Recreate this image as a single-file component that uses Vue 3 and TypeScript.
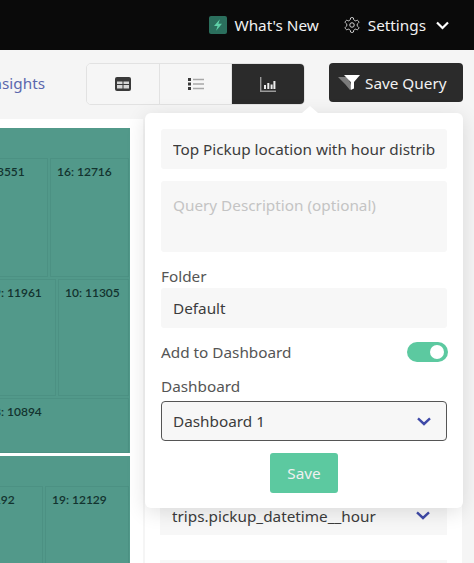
<script setup lang="ts">
import { ref } from 'vue'

interface Cell {
  label: string
  width: number
}

interface Group {
  rows: { height: number; cells: Cell[] }[]
}

const groups: Group[] = [
  {
    rows: [
      { height: 119, cells: [{ label: '15: 13551', width: 85 }, { label: '16: 12716', width: 79 }] },
      { height: 117, cells: [{ label: '9: 11961', width: 69 }, { label: '10: 11305', width: 71 }] },
      { height: 55, cells: [{ label: '8: 10894', width: 142 }] },
    ],
  },
  {
    rows: [
      { height: 90, cells: [{ label: '20: 12192', width: 90 }, { label: '19: 12129', width: 84 }] },
    ],
  },
]

const queryName = ref('Top Pickup location with hour distribution')
const folder = ref('Default')
</script>

<template>
  <div class="page">
    <header class="topbar">
      <div class="top-item">
        <span class="bolt-box">
          <svg width="14" height="14" viewBox="0 0 12 12"><path d="M7.6 1 2.600 6.800h3L4.400 11l5-6H6.300z" fill="#5fd0a8" /></svg>
        </span>
        What's New
      </div>
      <div class="top-item settings">
        <svg class="gear" width="18" height="18" viewBox="0 0 24 24" fill="none" stroke="#d8d8d8" stroke-width="1.300">
          <path d="M12.22 2h-.44a2 2 0 0 0-2 2v.18a2 2 0 0 1-1 1.73l-.43.25a2 2 0 0 1-2 0l-.15-.08a2 2 0 0 0-2.73.73l-.22.38a2 2 0 0 0 .73 2.73l.15.1a2 2 0 0 1 1 1.72v.51a2 2 0 0 1-1 1.74l-.15.09a2 2 0 0 0-.73 2.73l.22.38a2 2 0 0 0 2.73.73l.15-.08a2 2 0 0 1 2 0l.43.25a2 2 0 0 1 1 1.73V20a2 2 0 0 0 2 2h.44a2 2 0 0 0 2-2v-.18a2 2 0 0 1 1-1.73l.43-.25a2 2 0 0 1 2 0l.15.08a2 2 0 0 0 2.73-.73l.22-.39a2 2 0 0 0-.73-2.73l-.15-.08a2 2 0 0 1-1-1.74v-.5a2 2 0 0 1 1-1.74l.15-.09a2 2 0 0 0 .73-2.73l-.22-.38a2 2 0 0 0-2.73-.73l-.15.08a2 2 0 0 1-2 0l-.43-.25a2 2 0 0 1-1-1.73V4a2 2 0 0 0-2-2z" />
          <circle cx="12" cy="12" r="3" />
        </svg>
        Settings
        <svg class="top-chevron" width="13" height="9" viewBox="0 0 13 9" fill="none" stroke="#fff" stroke-width="2.200"><path d="M1 1.500 6.500 7 12 1.500" /></svg>
      </div>
    </header>

    <div class="toolbar">
      <a class="insights">Insights</a>
      <div class="segments">
        <button class="segment">
          <svg width="16" height="14" viewBox="0 0 16 14">
            <rect width="16" height="14" rx="2" fill="#3a3a3a" />
            <path d="M2 4.500h5.500V7H2zM8.500 4.500H14V7H8.500zM2 8h5.500v3.500H2zM8.500 8H14v3.500H8.500z" fill="#d6d6d6" />
          </svg>
        </button>
        <button class="segment">
          <svg width="16" height="14" viewBox="0 0 16 14">
            <path d="M0 1h3v3H0zM0 5.500h3v3H0zM0 10h3v3H0z" fill="#3a3a3a" />
            <path d="M5 2.500h11M5 7h11M5 11.500h11" stroke="#a8a8a8" stroke-width="1.500" />
          </svg>
        </button>
        <button class="segment active">
          <svg width="16" height="15" viewBox="0 0 16 15">
            <path d="M.7 0v14.300H16" fill="none" stroke="#9a9a9a" stroke-width="1.400" />
            <path d="M4 8h2v4H4zM7.300 6h2v6h-2zM10.600 7.500h2V12h-2zM13.400 4h2v8h-2z" fill="#ededed" />
          </svg>
        </button>
      </div>
      <button class="save-query">
        <svg width="22" height="15" viewBox="0 0 22 15">
          <path d="M0 2h10l4 11-2 2-5-6z" fill="#7b7b7b" />
          <path d="M6 0h16l-6 7v6.500L12.800 15V7z" fill="#fff" />
        </svg>
        Save Query
      </button>
    </div>

    <main class="content">
      <section class="chart-card">
        <div v-for="(group, g) in groups" :key="g" class="tree-group">
          <div class="tree-head"></div>
          <div v-for="(row, r) in group.rows" :key="r" class="tree-row" :style="{ height: row.height + 'px' }">
            <div v-for="cell in row.cells" :key="cell.label" class="tree-cell" :style="{ width: cell.width + 'px' }">
              {{ cell.label }}
            </div>
          </div>
        </div>
      </section>

      <aside class="side-card">
        <div class="side-select">
          <span>trips.pickup_datetime__hour</span>
          <svg width="14" height="9" viewBox="0 0 14 9" fill="none" stroke="#3f4aa8" stroke-width="2.400"><path d="M1 1.400 7 7l6-5.600" /></svg>
        </div>
        <div class="side-select"></div>
      </aside>
    </main>

    <form class="popover" @submit.prevent>
      <span class="arrow"></span>
      <input v-model="queryName" class="field" type="text" />
      <textarea class="field area" placeholder="Query Description (optional)"></textarea>
      <label class="label folder-label">Folder</label>
      <input v-model="folder" class="field" type="text" />
      <div class="toggle-row">
        <span class="label">Add to Dashboard</span>
        <span class="toggle"><i></i></span>
      </div>
      <label class="label dash-label">Dashboard</label>
      <div class="field dash-select">
        Dashboard 1
        <svg width="14" height="9" viewBox="0 0 14 9" fill="none" stroke="#3f4aa8" stroke-width="2.400"><path d="M1 1.400 7 7l6-5.600" /></svg>
      </div>
      <button class="save" type="submit">Save</button>
    </form>
  </div>
</template>

<style>
html,
body {
  margin: 0;
  overflow: hidden;
}
</style>

<style scoped>
.page {
  position: relative;
  width: 474px;
  height: 563px;
  overflow: hidden;
  background: #f5f5f5;
  font-family: "Noto Sans", sans-serif;
  font-size: 15.300px;
  color: #3c3c3c;
}

.topbar {
  display: flex;
  justify-content: flex-end;
  align-items: center;
  height: 50px;
  padding-right: 25px;
  box-sizing: border-box;
  background: #0a0a0a;
  color: #f2f2f2;
}

.top-item {
  display: flex;
  align-items: center;
}

.bolt-box {
  display: flex;
  align-items: center;
  justify-content: center;
  width: 18px;
  height: 18px;
  margin-right: 7px;
  border-radius: 2px;
  background: #2b6f5d;
}

.settings {
  margin-left: 24px;
}

.gear {
  margin-right: 7px;
}

.top-chevron {
  margin-left: 10px;
}

.toolbar {
  display: flex;
  justify-content: flex-end;
  align-items: flex-start;
  height: 69px;
  padding: 13px 11px 0 0;
  box-sizing: border-box;
}

.insights {
  flex: none;
  margin: 10px 41px 0 0;
  color: #5b67ad;
}

.segments {
  flex: none;
  display: flex;
  width: 219px;
  height: 42px;
  margin-right: 24px;
  border: 1px solid #e2e2e2;
  border-radius: 5px;
  overflow: hidden;
  box-sizing: border-box;
}

.segment {
  flex: 1;
  display: flex;
  align-items: center;
  justify-content: center;
  padding: 0;
  border: 0;
  border-right: 1px solid #e2e2e2;
  background: #f6f6f6;
}

.segment.active {
  border-right: 0;
  background: #2b2b2b;
}

.save-query {
  flex: none;
  display: flex;
  align-items: center;
  gap: 5px;
  width: 134px;
  height: 39px;
  padding: 0 0 0 9px;
  border: 0;
  border-radius: 4px;
  background: #2b2b2b;
  color: #f2f2f2;
  font: inherit;
}

.content {
  display: flex;
  align-items: flex-start;
  gap: 2px;
}

.chart-card {
  width: 143px;
  height: 444px;
  padding: 9px 13px 0 0;
  box-sizing: border-box;
  background: #fff;
  overflow: hidden;
}

.tree-group {
  margin-bottom: 3px;
  background: #52998a;
}

.tree-head {
  height: 30px;
}

.tree-row {
  display: flex;
  justify-content: flex-end;
  gap: 2px;
  margin-bottom: 2px;
  padding-right: 1px;
}

.tree-cell {
  flex: none;
  padding: 5px 6px;
  box-sizing: border-box;
  border: 1px solid #4c9183;
  font-family: Lato, sans-serif;
  font-size: 12px;
  font-weight: 600;
  color: #12332f;
  white-space: nowrap;
}

.side-card {
  width: 317px;
  height: 444px;
  padding: 371px 15px 0;
  box-sizing: border-box;
  background: #fff;
}

.side-select {
  display: flex;
  align-items: center;
  justify-content: space-between;
  height: 45px;
  margin-bottom: 25px;
  padding: 6px 17px 0 12px;
  box-sizing: border-box;
  background: #f7f7f7;
}

.popover {
  position: absolute;
  left: 145px;
  top: 113px;
  display: flex;
  flex-direction: column;
  width: 318px;
  height: 395px;
  padding: 16px 16px 0;
  box-sizing: border-box;
  border-radius: 6px;
  background: #fff;
  box-shadow: 0 4px 20px rgba(0, 0, 0, 0.12);
}

.arrow {
  position: absolute;
  left: 157px;
  top: -7px;
  border-left: 8px solid transparent;
  border-right: 8px solid transparent;
  border-bottom: 7px solid #fff;
}

.field {
  flex: none;
  width: 286px;
  height: 40px;
  padding: 0 12px;
  box-sizing: border-box;
  border: 0;
  border-radius: 3px;
  outline: 0;
  background: #f7f7f7;
  color: #3c3c3c;
  font: inherit;
}

.area {
  height: 71px;
  margin-top: 12px;
  padding-top: 14px;
  resize: none;
}

.area::placeholder {
  color: #c4c4c4;
}

.label {
  color: #555;
  line-height: 20px;
}

.folder-label {
  margin-top: 14px;
  margin-bottom: 2px;
}

.toggle-row {
  display: flex;
  justify-content: space-between;
  align-items: center;
  margin-top: 14px;
}

.toggle {
  display: flex;
  justify-content: flex-end;
  align-items: center;
  width: 41px;
  height: 20px;
  margin-right: -1px;
  padding-right: 4px;
  box-sizing: border-box;
  border-radius: 10px;
  background: #5cc9a0;
}

.toggle i {
  width: 14px;
  height: 14px;
  border-radius: 50%;
  background: #fff;
}

.dash-label {
  margin-top: 14px;
  margin-bottom: 5px;
}

.dash-select {
  display: flex;
  align-items: center;
  justify-content: space-between;
  padding: 0 15px 0 11px;
  border: 1px solid #555;
  border-radius: 4px;
}

.save {
  align-self: center;
  width: 68px;
  height: 40px;
  margin-top: 12px;
  padding: 0;
  border: 0;
  border-radius: 3px;
  background: #5cc9a0;
  color: #f0f0f0;
  font: inherit;
}
</style>
